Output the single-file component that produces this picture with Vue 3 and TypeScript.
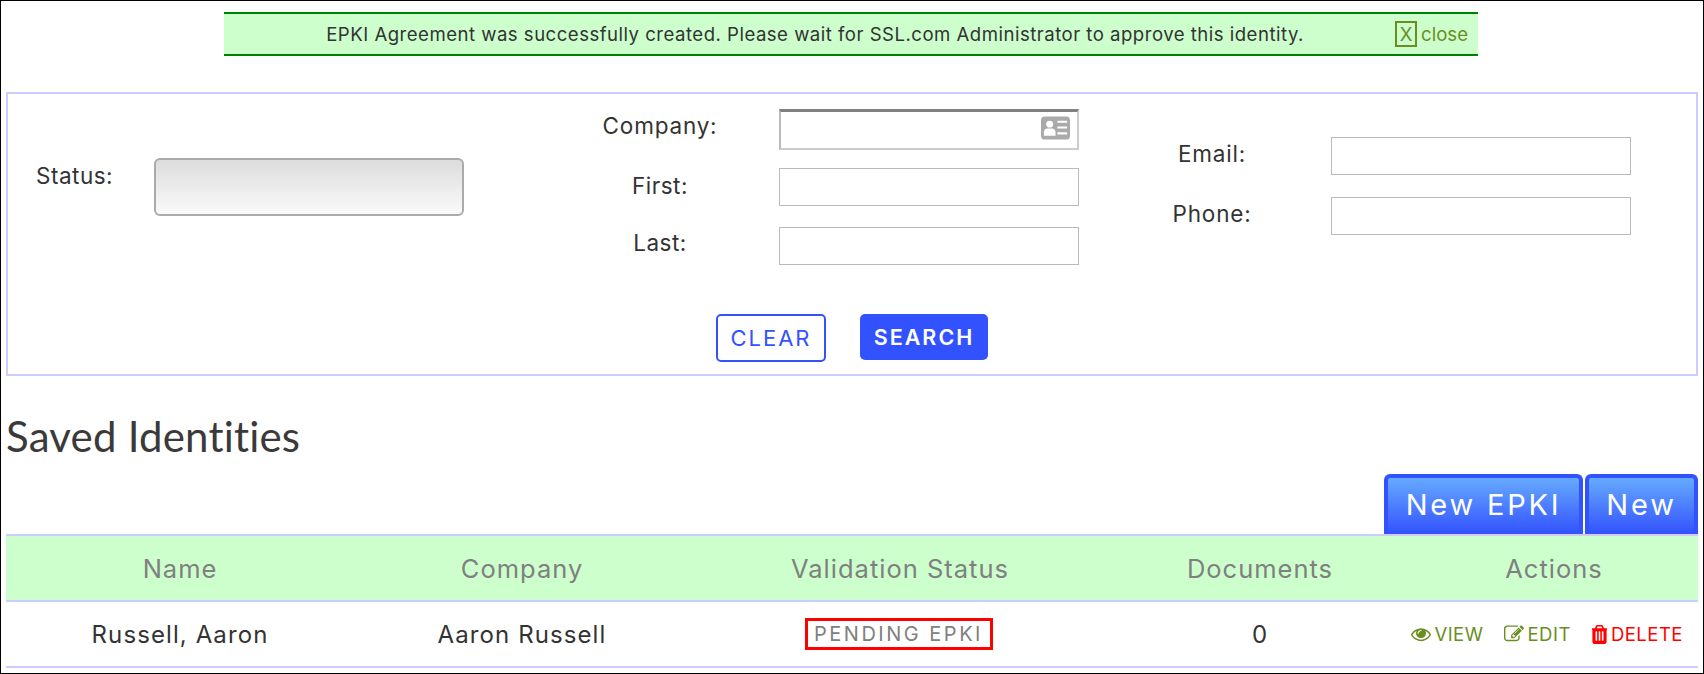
<template>
  <div class="page">
    <div class="alert">
      <p class="alert-text">{{ message }}</p>
      <a class="alert-close"><span class="x-box">X</span> close</a>
    </div>

    <form class="search-panel" @submit.prevent>
      <div class="filters">
        <div class="status-col">
          <label class="status-label">Status:</label>
          <div class="status-select"></div>
        </div>
        <div class="field-col names">
          <div class="field company">
            <label>Company:</label>
            <div class="company-input">
              <svg class="card-icon" viewBox="0 0 30 24">
                <rect width="30" height="24" rx="4" fill="#aaa" />
                <circle cx="9" cy="8" r="3.6" fill="#fff" />
                <path d="M3 20v-3.500q0-4 4-4h4q4 0 4 4v3.500z" fill="#fff" />
                <path d="M17 5.500h10M17 11.500h10M17 17.500h10" stroke="#fff" stroke-width="2.200" />
              </svg>
            </div>
          </div>
          <div class="field first">
            <label>First:</label>
            <input type="text" />
          </div>
          <div class="field">
            <label>Last:</label>
            <input type="text" />
          </div>
        </div>
        <div class="field-col contact">
          <div class="field">
            <label>Email:</label>
            <input type="text" />
          </div>
          <div class="field">
            <label>Phone:</label>
            <input type="text" />
          </div>
        </div>
      </div>
      <div class="panel-actions">
        <button class="btn-clear" type="button">CLEAR</button>
        <button class="btn-search" type="submit">SEARCH</button>
      </div>
    </form>

    <h2 class="title">Saved Identities</h2>

    <div class="toolbar">
      <a class="tab-btn epki">New EPKI</a>
      <a class="tab-btn new">New</a>
    </div>

    <div class="table">
      <div class="row head">
        <div v-for="col in columns" :key="col">{{ col }}</div>
      </div>
      <div class="row body">
        <div>Russell, Aaron</div>
        <div>Aaron Russell</div>
        <div><span class="badge">PENDING EPKI</span></div>
        <div>0</div>
        <div class="actions">
          <a class="view">
            <svg viewBox="0 0 1792 1792"><path :d="eyePath" /></svg>VIEW
          </a>
          <a class="edit">
            <svg viewBox="0 0 1792 1792"><path :d="editPath" /></svg>EDIT
          </a>
          <a class="delete">
            <svg class="trash" viewBox="288 128 1216 1536"><path :d="trashPath" /></svg>DELETE
          </a>
        </div>
      </div>
    </div>
  </div>
</template>

<script setup lang="ts">
const message =
  "EPKI Agreement was successfully created. Please wait for SSL.com Administrator to approve this identity.";

const columns: string[] = ["Name", "Company", "Validation Status", "Documents", "Actions"];

const eyePath =
  "M1664 960q-152-236-381-353 61 104 61 225 0 185-131.500 316.500t-316.500 131.500-316.500-131.500-131.500-316.500q0-121 61-225-229 117-381 353 133 205 333.500 326.500t434.500 121.500 434.500-121.500 333.500-326.500zm-720-384q0-20-14-34t-34-14q-125 0-214.500 89.500t-89.500 214.500q0 20 14 34t34 14 34-14 14-34q0-86 61-147t147-61q20 0 34-14t14-34zm848 384q0 34-20 69-140 230-376.500 368.500t-499.500 138.500-499.500-139-376.500-368q-20-35-20-69t20-69q140-229 376.500-368t499.500-139 499.500 139 376.500 368q20 35 20 69z";
const editPath =
  "M888 1184l116-116-152-152-116 116v56h96v96h56zm440-720q-16-16-33 1l-350 350q-17 17-1 33t33-1l350-350q17-17 1-33zm80 594v190q0 119-84.500 203.500t-203.500 84.500h-832q-119 0-203.500-84.500t-84.500-203.500v-832q0-119 84.500-203.500t203.500-84.500h832q63 0 117 25 15 7 18 23 3 17-9 29l-49 49q-14 14-32 8-23-6-45-6h-832q-66 0-113 47t-47 113v832q0 66 47 113t113 47h832q66 0 113-47t47-113v-126q0-13 9-22l64-64q15-15 35-7t20 29zm-96-738l288 288-672 672h-288v-288zm444 132l-92 92-288-288 92-92q28-28 68-28t68 28l152 152q28 28 28 68t-28 68z";
const trashPath =
  "M704 1376v-704q0-14-9-23t-23-9h-64q-14 0-23 9t-9 23v704q0 14 9 23t23 9h64q14 0 23-9t9-23zm256 0v-704q0-14-9-23t-23-9h-64q-14 0-23 9t-9 23v704q0 14 9 23t23 9h64q14 0 23-9t9-23zm256 0v-704q0-14-9-23t-23-9h-64q-14 0-23 9t-9 23v704q0 14 9 23t23 9h64q14 0 23-9t9-23zm-544-992h448l-48-117q-7-9-17-11h-317q-10 2-17 11zm928 32v64q0 14-9 23t-23 9h-96v948q0 83-47 143.500t-113 60.500h-832q-66 0-113-57.500t-47-140.500v-954h-96q-14 0-23-9t-9-23v-64q0-14 9-23t23-9h309l70-167q15-37 54-63t79-26h320q40 0 79 26t54 63l70 167h309q14 0 23 9t9 23z";
</script>

<style>
html,
body {
  background: #fff;
}
</style>

<style scoped>
.page {
  box-sizing: border-box;
  width: 1704px;
  height: 674px;
  border: 1px solid #000;
  padding: 11px 5px 0 5px;
  font-family: Inter, "Open Sans", sans-serif;
  color: #333;
  overflow: hidden;
}

.alert {
  box-sizing: border-box;
  display: flex;
  align-items: center;
  width: 1254px;
  height: 44px;
  margin-left: 218px;
  background: #ccffcc;
  border-top: 2px solid #008000;
  border-bottom: 2px solid #008000;
}
.alert-text {
  flex: 1;
  margin: 0;
  padding-left: 11px;
  font-size: 18.600px;
  letter-spacing: 0.48px;
  text-align: center;
  white-space: nowrap;
}
.alert-close {
  display: flex;
  align-items: center;
  gap: 4px;
  margin-right: 10px;
  color: #6b8e23;
  font-size: 18.600px;
}
.x-box {
  box-sizing: border-box;
  width: 22px;
  height: 26px;
  border: 2px solid #6b8e23;
  text-align: center;
  line-height: 22px;
}

.search-panel {
  box-sizing: border-box;
  height: 284px;
  margin-top: 36px;
  padding: 14px 0 0;
  border: 2px solid #ccccff;
}
.filters {
  display: flex;
  align-items: center;
  height: 157px;
}
label {
  font-size: 22.500px;
  letter-spacing: 0.5px;
}
.status-col {
  display: flex;
  align-items: center;
  width: 533px;
  padding-left: 28px;
  box-sizing: border-box;
}
.status-label {
  width: 118px;
  margin-top: -23px;
}
.status-select {
  box-sizing: border-box;
  width: 310px;
  height: 58px;
  border: 2px solid #aaa;
  border-radius: 6px;
  background: linear-gradient(#dcdcdc, #fafafa);
}
.field-col {
  display: flex;
  flex-direction: column;
}
.names {
  width: 552px;
}
.field {
  display: flex;
  align-items: center;
}
.field label {
  width: 238px;
  text-align: center;
  margin-top: -6px;
}
.field input,
.company-input {
  box-sizing: border-box;
  width: 300px;
  height: 38px;
  padding: 0 6px;
  border: 1px solid #bbb;
  background: #fff;
}
.company {
  margin-bottom: 18px;
}
.company label {
  margin-top: -8px;
  letter-spacing: 0.8px;
}
.first {
  margin-bottom: 21px;
}
.first label {
  margin-top: -2px;
}
.company-input {
  display: flex;
  align-items: center;
  justify-content: flex-end;
  height: 41px;
  padding: 0 7px 3px 0;
  border: 2px solid;
  border-color: #808080 #ccc #ccc #bbb;
  border-top-width: 3px;
}
.card-icon {
  width: 29px;
  height: 24px;
}
.contact {
  gap: 22px;
  margin-top: -2px;
}
.contact label {
  margin-top: -4px;
  letter-spacing: 0.8px;
}

.panel-actions {
  display: flex;
  justify-content: center;
  align-items: flex-start;
  gap: 34px;
  margin-top: 49px;
}
.panel-actions button {
  box-sizing: border-box;
  border-radius: 5px;
  font-family: Inter, sans-serif;
  letter-spacing: 2px;
  cursor: pointer;
}
.btn-clear {
  width: 110px;
  height: 48px;
  background: #fff;
  border: 2px solid #3352ff;
  color: #3352ff;
  font-size: 22px;
  font-weight: 400;
}
.btn-search {
  width: 128px;
  height: 46px;
  background: #3352ff;
  border: none;
  color: #fff;
  font-size: 21.500px;
  font-weight: 600;
}

.title {
  margin: 35px 0 0;
  font-family: Lato, sans-serif;
  font-size: 42px;
  font-weight: 400;
  letter-spacing: 0.2px;
  line-height: 50px;
  color: #3a3a3a;
}

.toolbar {
  display: flex;
  justify-content: flex-end;
  gap: 2px;
  margin-top: 13px;
}
.tab-btn {
  box-sizing: border-box;
  display: flex;
  align-items: center;
  justify-content: center;
  height: 60px;
  padding-bottom: 4px;
  border: 4px solid #3352ff;
  border-bottom: none;
  border-radius: 6px 6px 0 0;
  background: linear-gradient(#66aaff, #3352ff);
  color: #fff;
  font-size: 29px;
  letter-spacing: 2.800px;
}
.epki {
  width: 199px;
}
.new {
  width: 113px;
}

.table {
  border-top: 2px solid #ccccff;
}
.row {
  display: grid;
  grid-template-columns: 348px 336px 420px 300px 288px;
  align-items: center;
  height: 66px;
  box-sizing: border-box;
  border-bottom: 2px solid #ccccff;
  text-align: center;
}
.head {
  background: #ccffcc;
  color: #808080;
  font-size: 25.500px;
  letter-spacing: 1px;
}
.body {
  font-size: 24px;
  letter-spacing: 1.100px;
}
.badge {
  display: inline-block;
  box-sizing: border-box;
  width: 188px;
  height: 32px;
  margin-right: 3px;
  border: 3px solid #f00;
  color: #808080;
  font-size: 20px;
  line-height: 26px;
  letter-spacing: 2.500px;
  white-space: nowrap;
}
.actions {
  display: flex;
  justify-content: flex-end;
  gap: 21px;
  padding-right: 15px;
  font-size: 18.500px;
  letter-spacing: 0.5px;
}
.actions a {
  display: flex;
  align-items: center;
  gap: 3px;
}
.actions svg {
  width: 20px;
  height: 20px;
  fill: currentColor;
}
.actions .trash {
  width: 15px;
  height: 19px;
  margin-right: 1px;
}
.view,
.edit {
  color: #6b8e23;
}
.delete {
  color: #f00;
}
</style>
